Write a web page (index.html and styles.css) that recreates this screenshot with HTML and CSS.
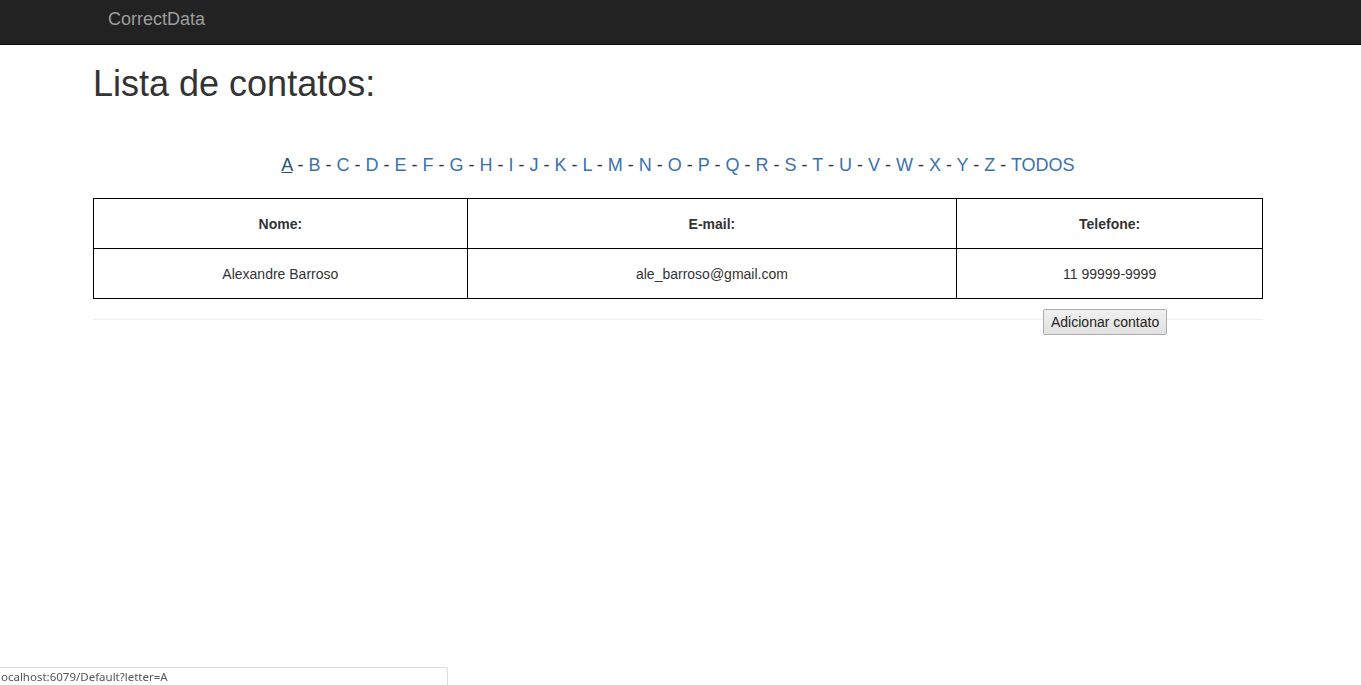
FILE: index.html
```html
<!DOCTYPE html>
<html lang="pt-BR">
<head>
<meta charset="utf-8">
<title>Lista de contatos</title>
<link rel="stylesheet" href="styles.css">
</head>
<body>
<nav class="navbar">
  <div class="navbar-inner">
    <a class="brand" href="#">CorrectData</a>
  </div>
</nav>
<main class="container">
  <h1 class="title">Lista de contatos:</h1>
  <p class="letters">
    <a class="active" href="#">A</a> - <a href="#">B</a> - <a href="#">C</a> - <a href="#">D</a> - <a href="#">E</a> - <a href="#">F</a> - <a href="#">G</a> - <a href="#">H</a> - <a href="#">I</a> - <a href="#">J</a> - <a href="#">K</a> - <a href="#">L</a> - <a href="#">M</a> - <a href="#">N</a> - <a href="#">O</a> - <a href="#">P</a> - <a href="#">Q</a> - <a href="#">R</a> - <a href="#">S</a> - <a href="#">T</a> - <a href="#">U</a> - <a href="#">V</a> - <a href="#">W</a> - <a href="#">X</a> - <a href="#">Y</a> - <a href="#">Z</a> - <a href="#">TODOS</a>
  </p>
  <table class="contacts">
    <thead>
      <tr>
        <th class="col-name">Nome:</th>
        <th class="col-mail">E-mail:</th>
        <th class="col-phone">Telefone:</th>
      </tr>
    </thead>
    <tbody>
      <tr>
        <td>Alexandre Barroso</td>
        <td>ale_barroso@gmail.com</td>
        <td>11 99999-9999</td>
      </tr>
    </tbody>
  </table>
  <hr class="divider">
  <div class="actions">
    <button class="btn" type="button">Adicionar contato</button>
  </div>
</main>
<div class="statusbar"><span>localhost:6079/Default?letter=A</span></div>
</body>
</html>
```
FILE: styles.css
```css
html, body {
  margin: 0;
  padding: 0;
}
body {
  font-family: "Liberation Sans", Arial, Helvetica, sans-serif;
  font-size: 14px;
  line-height: 20px;
  color: #333;
  background: #fff;
}
.navbar {
  background: #222;
  border-bottom: 1px solid #080808;
  height: 44px;
}
.navbar-inner {
  margin-left: 93px;
  padding: 9px 15px 0;
}
.brand {
  font-size: 18px;
  line-height: 20px;
  color: #9d9d9d;
  text-decoration: none;
}
.container {
  margin-left: 93px;
  width: 1170px;
}
.title {
  font-size: 36px;
  font-weight: 500;
  line-height: 40px;
  margin: 19px 0 0;
  color: #333;
}
.letters {
  margin: 51px 0 0;
  text-align: center;
  font-size: 18px;
  line-height: 20px;
  color: #333;
}
.letters a {
  color: #3a72ad;
  text-decoration: none;
}
.letters a.active {
  color: #23527c;
  text-decoration: underline;
}
.contacts {
  margin-top: 23px;
  width: 1170px;
  border-collapse: collapse;
  text-align: center;
}
.contacts th,
.contacts td {
  border: 1px solid #000;
  height: 50px;
  padding: 0 8px;
  font-size: 14px;
  line-height: 20px;
  box-sizing: border-box;
}
.contacts th {
  font-weight: bold;
}
.col-name { width: 374px; }
.col-mail { width: 490px; }
.col-phone { width: 306px; }
.divider {
  margin: 20px 0 0;
  border: 0;
  border-top: 1px solid #eee;
  height: 0;
}
.actions {
  margin-top: -11px;
  padding-left: 950px;
}
.btn {
  font-family: "Liberation Sans", Arial, Helvetica, sans-serif;
  font-size: 14px;
  line-height: 18px;
  color: #222;
  padding: 3px 7px;
  border: 1px solid #adadad;
  border-radius: 2px;
  background: linear-gradient(#f0f0f0, #e1e1e1);
}
.statusbar {
  position: fixed;
  left: 0;
  bottom: 0;
  width: 447px;
  height: 17px;
  border: 1px solid #dcdcdc;
  border-left: 0;
  border-bottom: 0;
  border-top-right-radius: 3px;
  background: #fff;
  overflow: hidden;
  font-family: "Noto Sans", "Open Sans", sans-serif;
  font-size: 11.5px;
  line-height: 18px;
  color: #555;
}
.statusbar span {
  margin-left: -2px;
  display: inline-block;
}
```
